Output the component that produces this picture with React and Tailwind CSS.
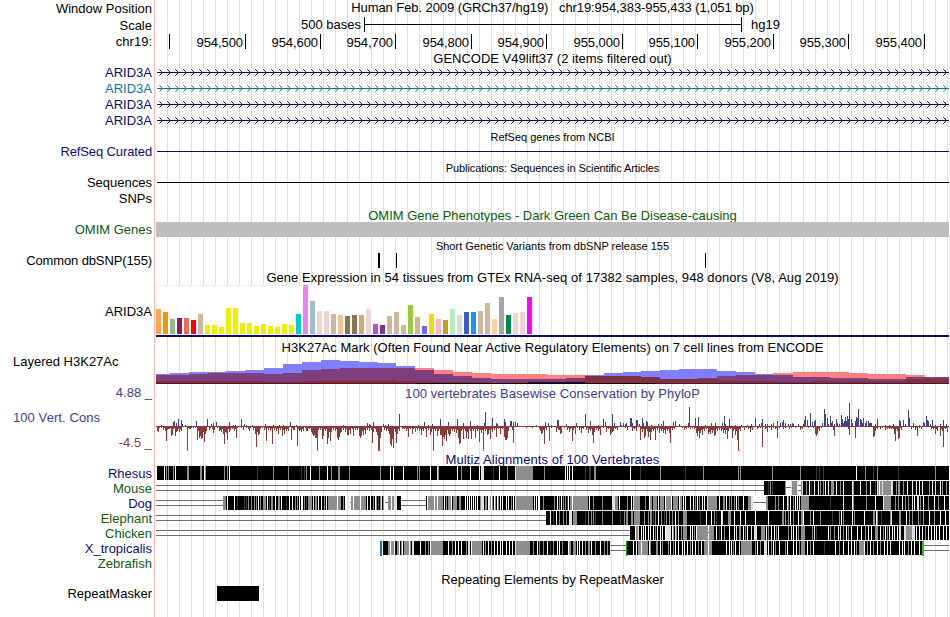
const LEFT = 156;
const WIDTH = 793;

const ticks = [
    [169, ''], [245, '954,500'], [320, '954,600'], [395, '954,700'], [471, '954,800'], [546, '954,900'],
    [622, '955,000'], [697, '955,100'], [773, '955,200'], [848, '955,300'], [924, '955,400'],
];

const genes = ['#0c0c78', '#0c73b0', '#0c0c78', '#0c0c78'];

// GTEx tissues: [height, color]
const tissues = [
    [25, '#ffa54f'], [22, '#ee9a00'], [15, '#8fbc8f'], [16, '#8b1c62'], [16, '#ee6a50'], [14, '#ff0000'], [20, '#cdb79e'],
    [9, '#eeee00'], [9, '#eeee00'], [7, '#eeee00'], [26, '#eeee00'], [26, '#eeee00'], [11, '#eeee00'], [11, '#eeee00'],
    [8, '#eeee00'], [10, '#eeee00'], [8, '#eeee00'], [7, '#eeee00'], [10, '#eeee00'], [9, '#eeee00'], [20, '#00cdcd'],
    [49, '#ee82ee'], [33, '#9ac0cd'], [23, '#eed5d2'], [23, '#eed5d2'], [20, '#cdb79e'], [19, '#eec591'], [18, '#8b7355'],
    [19, '#8b7355'], [19, '#cdaa7d'], [25, '#eed5d2'], [10, '#b452cd'], [9, '#7a378b'], [18, '#cdb79e'], [22, '#cdb79e'],
    [9, '#cdb79e'], [29, '#9acd32'], [17, '#cdb79e'], [8, '#7a67ee'], [20, '#ffd700'], [15, '#ffb6c1'], [14, '#cd9b1d'],
    [25, '#b4eeb4'], [19, '#d9d9d9'], [22, '#3a5fcd'], [22, '#1e90ff'], [23, '#cdb79e'], [31, '#cdb79e'], [15, '#ffd39b'],
    [37, '#a6a6a6'], [19, '#008b45'], [21, '#eed5d2'], [22, '#eed5d2'], [37, '#ff00ff'],
];

// Layered H3K27Ac steps, "x:height above the baseline"; a height of 0 ends the run
const marks = [
    ['#ff8080', '415:16 434:14 453:12 472:11 491:10 547:9 585:0 773:11 793:12 849:11 868:10 906:9 925:0'],
    ['#8080ff', '156:10 170:11 189:12 226:13 245:14 264:16 283:20 302:22 321:24 340:23 359:22 378:21 396:18 415:0 585:9 604:11 623:12 641:13 660:14 679:15 717:13 736:12 755:10 773:0'],
    ['#7f3f7f', '156:9 189:10 208:11 264:10 283:11 302:14 321:15 340:16 415:14 434:10 453:8 472:6 491:5 547:5 566:6 585:0 698:6 717:8 736:9 793:7 830:6 868:5 906:7'],
    ['#80303f', '156:3 264:2 302:3 321:4 396:3 434:2 491:1 510:2 566:3 585:8 641:7 660:5 698:5 717:4 736:3 774:2 811:3 868:3 906:5'],
];

const conserved =
    '161:1 173:4 174:5 176:3 178:7 181:6 182:2 185:1 196:5 207:7 211:2 213:3 216:4 229:4 233:1 235:1 241:7 244:2 246:1 252:1 265:2 273:1 279:1 283:1 290:4 296:1 ' +
    '343:1 367:3 369:2 370:1 373:4 383:2 385:1 388:2 399:12 418:1 424:4 428:1 432:2 440:7 448:4 457:7 463:3 470:5 477:1 484:3 485:14 492:8 496:3 497:2 504:7 505:4 510:5 511:5 513:4 515:4 517:3 536:1 545:4 548:3 ' +
    '551:1 557:6 558:6 566:2 576:3 585:12 590:5 598:1 603:7 605:4 612:12 614:3 620:4 621:1 623:3 625:2 626:3 630:8 631:8 632:3 636:6 637:6 639:2 642:8 643:3 646:5 647:4 651:1 658:2 661:2 663:5 673:4 675:5 679:2 688:3 689:19 ' +
    '695:8 698:9 705:1 711:3 715:3 722:3 724:10 725:2 729:7 735:1 741:1 747:1 751:2 755:8 759:2 761:3 762:7 765:2 767:2 771:2 773:3 777:5 780:3 782:4 783:6 785:3 788:2 790:2 792:3 793:2 798:2 803:2 804:6 805:10 807:6 810:13 812:4 ' +
    '814:5 815:6 822:3 824:17 825:12 827:8 828:2 830:10 831:3 832:5 834:2 836:7 837:3 839:2 841:11 842:7 843:3 844:5 845:9 846:5 847:10 848:7 849:23 851:7 852:3 855:5 856:9 857:8 858:17 860:7 861:6 862:3 863:8 865:3 866:5 868:5 869:3 870:3 871:3 ' +
    '875:2 877:7 885:1 889:1 893:2 899:6 900:5 903:6 905:2 908:16 909:8 913:3 919:1 923:4 924:3 926:10 927:6 928:5 930:2 932:6 935:1 940:2 943:6 946:2';

const accelerated =
    '157:5 158:6 159:2 161:2 163:4 164:2 165:5 166:15 167:4 168:3 169:3 171:10 172:9 173:3 175:10 176:6 177:5 179:6 181:5 183:1 187:24 189:3 190:3 191:2 193:2 195:2 197:14 198:5 199:12 200:10 201:13 202:12 204:16 205:8 206:5 209:4 210:2 ' +
    '212:3 213:7 214:4 217:2 219:5 220:4 221:6 223:8 224:18 225:6 226:7 227:14 229:6 230:4 232:3 234:5 236:12 237:2 241:2 243:4 246:2 248:3 249:5 250:2 253:4 255:8 256:21 257:6 258:9 259:8 260:3 262:2 264:4 266:15 268:4 270:5 272:18 274:4 ' +
    '276:5 278:8 280:4 282:10 284:8 286:5 288:5 291:14 293:4 294:4 297:20 299:5 300:4 301:6 303:5 305:2 306:5 307:5 309:3 311:6 312:8 313:10 314:9 315:12 316:12 317:24 318:4 320:4 322:13 323:10 325:5 327:18 328:12 330:15 331:6 333:4 335:5 ' +
    '337:12 338:14 339:11 340:7 341:6 343:4 345:6 347:9 348:9 350:8 352:3 353:10 355:4 357:4 359:10 360:12 361:10 363:9 365:8 367:4 369:5 371:4 372:17 373:6 375:3 376:6 377:9 378:24 379:24 380:12 381:6 384:4 386:5 388:5 389:8 390:18 391:20 392:13 ' +
    '393:22 395:6 396:17 397:8 399:5 402:3 404:3 406:5 408:11 410:3 412:8 413:3 415:6 417:4 419:5 421:9 423:5 425:3 426:11 428:4 430:9 431:6 433:24 435:5 437:10 438:5 440:9 441:9 442:20 443:11 444:13 445:9 446:15 448:8 449:10 450:8 452:5 454:6 456:7 ' +
    '458:12 459:18 460:17 461:5 463:13 465:5 466:12 468:13 470:5 471:13 473:5 475:12 477:5 479:16 481:7 483:24 485:5 487:9 488:8 490:13 492:6 494:4 496:11 498:3 500:8 502:3 504:11 505:14 506:14 507:12 508:5 512:4 513:17 520:1 523:1 526:2 529:1 532:2 ' +
    '535:1 537:1 539:3 540:5 541:8 542:7 544:18 546:4 549:15 551:2 554:1 556:6 558:4 559:4 560:8 561:7 564:2 567:4 569:6 570:3 572:15 573:4 575:8 577:2 579:4 581:7 583:3 586:4 588:7 590:5 592:9 593:17 594:6 596:4 598:5 600:9 603:2 606:6 608:3 610:9 ' +
    '611:7 612:6 613:5 615:3 617:4 619:1 623:1 625:2 627:4 629:1 632:5 634:3 636:5 640:14 642:6 644:12 645:10 647:5 648:11 650:14 651:6 653:5 655:14 657:4 659:7 661:5 663:7 665:8 667:5 669:7 670:17 672:4 674:3 676:1 682:2 684:4 686:3 688:2 690:3 ' +
    '692:2 694:3 696:7 697:10 699:12 700:7 702:9 704:5 706:3 708:8 709:6 710:8 712:7 714:10 715:9 717:5 719:4 721:5 723:7 725:8 727:13 728:5 730:3 732:12 733:5 735:9 737:14 738:24 740:5 742:2 744:4 746:2 748:3 750:6 752:4 754:1 757:3 758:2 760:2 ' +
    '762:21 765:3 767:6 769:2 771:4 773:2 775:3 777:12 779:2 781:1 783:3 785:2 787:1 789:3 791:2 793:1 795:2 797:1 800:4 802:3 808:2 811:1 813:2 815:8 816:10 817:8 819:5 821:2 833:4 834:10 843:1 848:3 849:9 853:1 855:12 870:1 873:11 874:10 875:5 ' +
    '877:3 880:3 882:2 885:4 887:3 889:3 891:3 893:3 894:8 895:15 897:5 898:13 899:12 901:4 904:1 911:3 913:2 915:4 917:10 919:2 921:3 923:1 929:1 931:3 933:3 935:8 937:5 940:10 942:5 943:21 945:3 947:6';

// Positions where the negative score runs off the scale
const clipped = [187, 317, 378, 379, 433, 483, 738];

// Alignments: blocks are black, stripes are "x + shade + width"
const species = [
    {
        name: 'Rhesus', color: 'text-[#0c0c78]', blocks: [[157, 949]], gaps: [], chains: [],
        stripes:
            '164w 166g 168g 173g 175w 187g2 200g2 204w 205g 224g 227g 229w 257d 273g 288g 301d 304d 306g 310w 319g 327w 331g 338g2 349g 380g 390w 393w 403w 417g 419g 430w 437l 438g 457w 461g 470w 479w 481l3 493d 499w 507g 515l 516g17 544g ' +
            '565w 567w 569w 572w 585d 589d2 594g2 630w 640d 660g 685d 703g 738g 740g 772g 800g 816d 819d 823d 856w 865g 873d 877g 898d 935g',
    },
    {
        name: 'Mouse', color: 'text-[#0c5a0c]', blocks: [[764, 785], [792, 797], [801, 949]], gaps: [[156, 764], [798, 801]], chains: [[786, 791]],
        stripes:
            '768d 770g 772d 785g 792g5 797l 801g 802l 806g 809w 811d 814w 818w 820g 823g 825w 828w 831g3 836w 840g 843w 852w 853g 860w 866g 870w 875d 877l 878g 879w 880g2 882l 883g8 891l2 896g 898g2 903g 907w 912w 916w 919w 922w 929g 932w 935l 940w 942g 946g',
    },
    {
        name: 'Dog', color: 'text-[#0c0c78]', blocks: [[223, 385], [388, 401], [426, 752], [766, 949]], gaps: [[156, 223], [401, 426]], chains: [[350, 351], [385, 388], [753, 766]],
        stripes:
            '223g3 227w 234w 237d 244d 246d 248g 251g 254g 256g 258w 260g 263g3 267w 269d 271g 272g 275w 278g2 281w 286d 289w 292w 295g 297g 299w 301w2 304g 306d 308g4 313l 315g2 318w 321w 324g 326w 328g9 337w 338g3 343g 345w2 347l2 349w2 ' +
            '351g2 353w 354g6 360w 361g4 365g 367w 370w 373g 375w 376g 378d 380g 381l 383g 384w 388g3 391w 392g3 394l3 427w 428g6 434w 435g2 437w 438g5 444w 446g 448g3 451w 453g4 459g2 465w 467w 469w 471w 473w 475w 477w 480g 481l3 485g2 488w ' +
            '489l 490g 491w 492g 494w 495g 497w 498g 500w 502w 506w 508w 511g 513w 515l 516g17 534l 536w 538w2 543g 554g 557w 559g 561w 563g 565g 567d 568w 570g2 572w 573g15 589w 593g 602g 612l3 615g3 619w 627g 631w 633l 634g6 645g 649w 650g2 ' +
            '653g4 658w 660g4 665w 666g5 671w 673g5 679w 680g2 683w 685w 690w 693w 695g 697w 699g 702w 704w 707l 708g9 719w 723g2 726w 729g 731g 734g 736w 738g 743w 748g3 751l2 766g 767g 775g 778g 783w 787l 788g 790w 793g 795w 797w 799l ' +
            '801g8 830d 843l 852w 853g 866g 875w 883l 884g7 895g 898g 902w 905g 908g 912l 914w 917l2 920g 923w 928g 934w 938g 944w',
    },
    {
        name: 'Elephant', color: 'text-[#0c5a0c]', blocks: [[546, 949]], gaps: [[156, 546]], chains: [],
        stripes:
            '550w 553d 556w 559g 563g 566g 569l3 573g4 585d 588g 591g 593g 595d 602g 612g 620d 624g 626g2 631g2 634g6 644g 648g 650g2 653d 655g 658w 661g 664d 666g 669g 672g 675w 678g 683g4 700d 706w 711w 714g 716d 721w 722l 728g3 734w 740w ' +
            '745w 755w 768w 782g2 785g 788g 790w 793g 798w 801g2 803w 810g 813w 820g 832d 839g 841w 843g 852w 854g 864w 873g2 876w 877g 881d 890g 891l 899g 900g 906w 909g 912g 918g 920d 923g 929w 934g 940w 945w',
    },
    {
        name: 'Chicken', color: 'text-[#0c5a0c]', blocks: [[630, 949]], gaps: [[156, 630]], chains: [[708, 709]],
        stripes:
            '635w 636g2 638l 641w 643w 645w 648w 650w 653w 655g 657w 660w 662w 665w 666l5 672w 673g 675l 676g 678w 681g 683g4 690w 692w 694g 696w 697g11 708w 709g5 716w 719d 721w 724g 729w 734w 736l 739g2 743w 745g 747w 751l 754l3 761g4 766w ' +
            '768g 771w 774w 776g 778w 788g 791l 793w 796w 798g 801g4 812g 814l 816d 828w 830g 834g 838w 840l 843g 846w 848g 851w 857w 861w 865g 868w 871w 875g3 880w 883g 885w 887g 889l 892w 894w 897w 899l2 904l2 906g6 912l3 916w 919w 922w ' +
            '925g 928w 931w 934w 936w 939w 943w 946w',
    },
    {
        name: 'X_tropicalis', color: 'text-[#0c0c78]', blocks: [[383, 610], [627, 922]], gaps: [[610, 626], [924, 949]], chains: [],
        ends: [[380, 2, '#0c73c8'], [626, 1, '#00b400'], [922, 2, '#1ec81e']],
        stripes:
            '388g2 390w 391g3 394w 397g2 399w 401g 402w 404g5 409w 410g 412l2 420w 425g 428g 430w 431g12 448w 452g 455w 458w 461w 466g 468l2 471w 472g9 481g 483w 485g 488w 491g 494w 497w 500w 502w 506w 509w 512w 515l 516g14 533g 537w 539g 543g ' +
            '547w 550d 553g 557w 559w 562g 568w 569g2 573g3 577w 579w 582l 585g 588g2 591w 595g 600w 604g 607g 633w 636w 638g10 641w 649w 650g 656g2 660w 662g 668g 670w 673g 675w 678w 682w 684w 687w 690g 692w 695w 698g 701w 704g4 708w 709g3 ' +
            '726w 729w 731w 733g 735w 739l 741g11 755g 757w 760g 764l3 768w 771g 773w 775g 779w 785g 787w 793w 796w 799g 801g4 807w 810g 813w 824d 835w 839g 843w 848w 851w 854w 856g 859g5 864w 867g 870w 873g 877w 880g 884w 887w 890l 899w 902w ' +
            '904w 908g 911w 914w 919w',
    },
];

const shades = { w: '#ffffff', l: '#e0e0e0', g: '#8e8e8e', d: '#3a3a3a' };

const pairs = (text) => text.split(' ').map((item) => item.split(':').map(Number));

const Row = ({ className = 'h-4', label, labelClass = '', children }) => (
    <div className={`flex shrink-0 ${className}`}>
        <div className={`flex w-[152px] shrink-0 flex-col items-end leading-4 whitespace-pre ${labelClass}`}>{label}</div>
        <div className="ml-1 w-[793px] shrink-0">{children}</div>
    </div>
);

const Title = ({ className = 'h-[15px]', label, labelClass, textClass = 'pt-px', children }) => (
    <Row className={className} label={label} labelClass={labelClass}>
        <h2 className={`text-center leading-4 whitespace-pre ${textClass}`}>{children}</h2>
    </Row>
);

const Plot = ({ height, children }) => (
    <svg className="block" width={WIDTH} height={height} viewBox={`${LEFT} 0 ${WIDTH} ${height}`} shapeRendering="crispEdges">
        {children}
    </svg>
);

const Gene = ({ color }) => {
    const tips = [];
    for (let x = 162; x < 949; x += 8) tips.push(x);
    return (
        <Plot height={16}>
            <rect x={157} y={7} width={792} height={1} fill={color} />
            {tips.map((x) => (
                <g key={x} fill={color}>
                    {[1, 2, 3].map((d) => (
                        <g key={d} opacity={d === 3 ? 0.6 : 1}>
                            <rect x={x - d} y={7 - d} width={1} height={1} />
                            <rect x={x - d} y={7 + d} width={1} height={1} />
                        </g>
                    ))}
                </g>
            ))}
        </Plot>
    );
};

const Steps = ({ values, color }) => {
    const steps = pairs(values);
    return steps.map(([x, h], i) => {
        const end = i + 1 < steps.length ? steps[i + 1][0] : 949;
        return h > 0 && <rect key={x} x={x} y={29 - h} width={end - x} height={h} fill={color} />;
    });
};

const Wiggle = () => {
    const down = pairs(accelerated);
    return (
        <Plot height={51}>
            <rect x={156} y={25} width={793} height={1} fill="#8b3a3a" />
            {down.map(([x, h], i) => {
                const next = down[i + 1];
                // a single skipped base gets a short bar between its neighbours
                const between = next && next[0] - x === 2 ? Math.ceil(Math.min(h, next[1]) / 2) : 0;
                return (
                    <g key={x} fill="#8b3a3a">
                        <rect x={x} y={25} width={1} height={h} />
                        <rect x={x + 1} y={25} width={1} height={between} />
                    </g>
                );
            })}
            {pairs(conserved).map(([x, h]) => <rect key={x} x={x} y={25 - h} width={1} height={h} fill="#404090" />)}
            {clipped.map((x) => <rect key={x} x={x} y={48} width={1} height={2} fill="#ff00ff" />)}
        </Plot>
    );
};

const Alignment = ({ blocks, gaps, chains, stripes, ends = [] }) => (
    <Plot height={15}>
        {gaps.map(([a, b]) => (
            <g key={a} fill="#6e6e6e">
                <rect x={a} y={4} width={b - a} height={1} />
                <rect x={a} y={9} width={b - a} height={1} />
            </g>
        ))}
        {blocks.map(([a, b]) => <rect key={a} x={a} y={0} width={b - a} height={14} />)}
        {stripes.split(' ').map((item) => {
            const [, x, shade, w] = item.match(/(\d+)([a-z])(\d*)/);
            return <rect key={item} x={x} y={0} width={w || 1} height={14} fill={shades[shade]} />;
        })}
        {chains.map(([a, b]) => (
            <g key={a}>
                <rect x={a} y={0} width={b - a} height={14} fill="#fff" />
                <rect x={a} y={6} width={b - a} height={1} fill="#6e6e6e" />
            </g>
        ))}
        {ends.map(([x, w, color]) => <rect key={x} x={x} y={0} width={w} height={15} fill={color} />)}
    </Plot>
);

const App = () => {
    return (
        <main className="flex h-[617px] w-[950px] flex-col overflow-hidden font-['Liberation_Sans',Arial,sans-serif] text-[13px] text-black [background:linear-gradient(#ffb4b4,#ffb4b4)_154px_0/1px_100%_no-repeat,repeating-linear-gradient(90deg,transparent_0_11px,#dcdcff_11px_12px)_156px_0/793px_100%_no-repeat,white]">
            <Title className="h-[17px]" label="Window Position" labelClass="pt-px" textClass="tracking-[-0.08px]">
                Human Feb. 2009 (GRCh37/hg19)   chr19:954,383-955,433 (1,051 bp)
            </Title>
            <Row label="Scale" labelClass="pt-px">
                <Plot height={16}>
                    <text x={361} y={12} textAnchor="end">500 bases</text>
                    <rect x={364} y={0} width={1} height={15} />
                    <rect x={364} y={7} width={378} height={1} />
                    <rect x={741} y={0} width={1} height={15} />
                    <text x={751} y={12}>hg19</text>
                </Plot>
            </Row>
            <Row className="h-[17px]" label="chr19:" labelClass="pt-px">
                <Plot height={17}>
                    {ticks.map(([x, name]) => (
                        <g key={x}>
                            <text x={x - 2} y={14} textAnchor="end" className="tracking-[-0.08px]">{name}</text>
                            <rect x={x} y={1} width={1} height={15} />
                        </g>
                    ))}
                </Plot>
            </Row>

            <Title>GENCODE V49lift37 (2 items filtered out)</Title>
            {genes.map((color, i) => (
                <Row key={i} label="ARID3A" labelClass={i === 1 ? 'text-[#0c73b0]' : 'text-[#0c0c78]'}>
                    <Gene color={color} />
                </Row>
            ))}

            <Title textClass="text-[11px]">RefSeq genes from NCBI</Title>
            <Row label="RefSeq Curated" labelClass="text-[#0c0c78] tracking-[-0.12px]">
                <Plot height={16}><rect x={157} y={7} width={792} height={1} fill="#0c0c78" /></Plot>
            </Row>

            <Title textClass="text-[11px] tracking-[-0.09px]">Publications: Sequences in Scientific Articles</Title>
            <Row label="Sequences">
                <Plot height={16}><rect x={157} y={7} width={792} height={1} /></Plot>
            </Row>
            <Row label="SNPs" />

            <Title textClass="pt-px text-[#0c5a0c]">OMIM Gene Phenotypes - Dark Green Can Be Disease-causing</Title>
            <Row label="OMIM Genes" labelClass="text-[#0c5a0c]">
                <div className="h-[15px] bg-[#bebebe]" />
            </Row>

            <Title textClass="text-[11px]">Short Genetic Variants from dbSNP release 155</Title>
            <Row label="Common dbSNP(155)" labelClass="tracking-[-0.12px]">
                <Plot height={16}>
                    <rect x={378} y={0} width={2} height={15} />
                    <rect x={396} y={0} width={1} height={15} />
                    <rect x={705} y={0} width={1} height={15} />
                </Plot>
            </Row>

            <Title className="h-4" textClass="pt-px tracking-[0.055px]">
                Gene Expression in 54 tissues from GTEx RNA-seq of 17382 samples, 948 donors (V8, Aug 2019)
            </Title>
            <Row className="h-[54px]" label="ARID3A" labelClass="pt-[19px]">
                <Plot height={54}>
                    <rect x={156} y={0} width={378} height={50} fill="#f0f0f0" />
                    <rect x={157} y={1} width={376} height={48} fill="#fff" />
                    {tissues.map(([h, color], i) => (
                        <rect key={i} x={156 + i * 7} y={49 - h} width={5} height={h} fill={color} />
                    ))}
                    <rect x={156} y={50} width={793} height={2} fill="#0c0c78" />
                </Plot>
            </Row>

            <Title className="h-4" textClass="pt-px tracking-[0.05px]">
                H3K27Ac Mark (Often Found Near Active Regulatory Elements) on 7 cell lines from ENCODE
            </Title>
            <Row className="h-[31px]" label={<span className="-mt-px self-start pl-[13px]">Layered H3K27Ac</span>}>
                <Plot height={31}>
                    {marks.map(([color, values], i) => <Steps key={i} values={values} color={color} />)}
                    <rect x={156} y={28} width={260} height={1} fill="#601028" />
                    <rect x={416} y={28} width={240} height={1} fill="#140014" />
                    <rect x={528} y={27} width={57} height={1} fill="#28102d" />
                    <rect x={656} y={28} width={293} height={1} fill="#50182d" />
                </Plot>
            </Row>

            <Title
                label={<span className="-mt-px">4.88 _</span>}
                labelClass="text-[#404090]"
                textClass="text-[#404090] tracking-[0.06px]"
            >
                100 vertebrates Basewise Conservation by PhyloP
            </Title>
            <Row
                className="h-[51px]"
                labelClass="pt-[9px]"
                label={
                    <>
                        <span className="self-start pl-[13px] tracking-[0.08px] text-[#404090]">100 Vert. Cons</span>
                        <span className="mt-[9px] text-[#8b3a3a]">-4.5 _</span>
                    </>
                }
            >
                <Wiggle />
            </Row>

            <Title className="h-[14px]" textClass="text-[#0c0c78] tracking-[0.08px]">Multiz Alignments of 100 Vertebrates</Title>
            {species.map(({ name, color, ...alignment }) => (
                <Row key={name} className="h-[15px]" label={name} labelClass={color}>
                    <Alignment {...alignment} />
                </Row>
            ))}
            <Row className="h-[15px]" label="Zebrafish" labelClass="text-[#0c5a0c]" />

            <Title>Repeating Elements by RepeatMasker</Title>
            <Row label="RepeatMasker">
                <Plot height={16}><rect x={217} y={0} width={42} height={15} /></Plot>
            </Row>
        </main>
    );
};

export default App;
